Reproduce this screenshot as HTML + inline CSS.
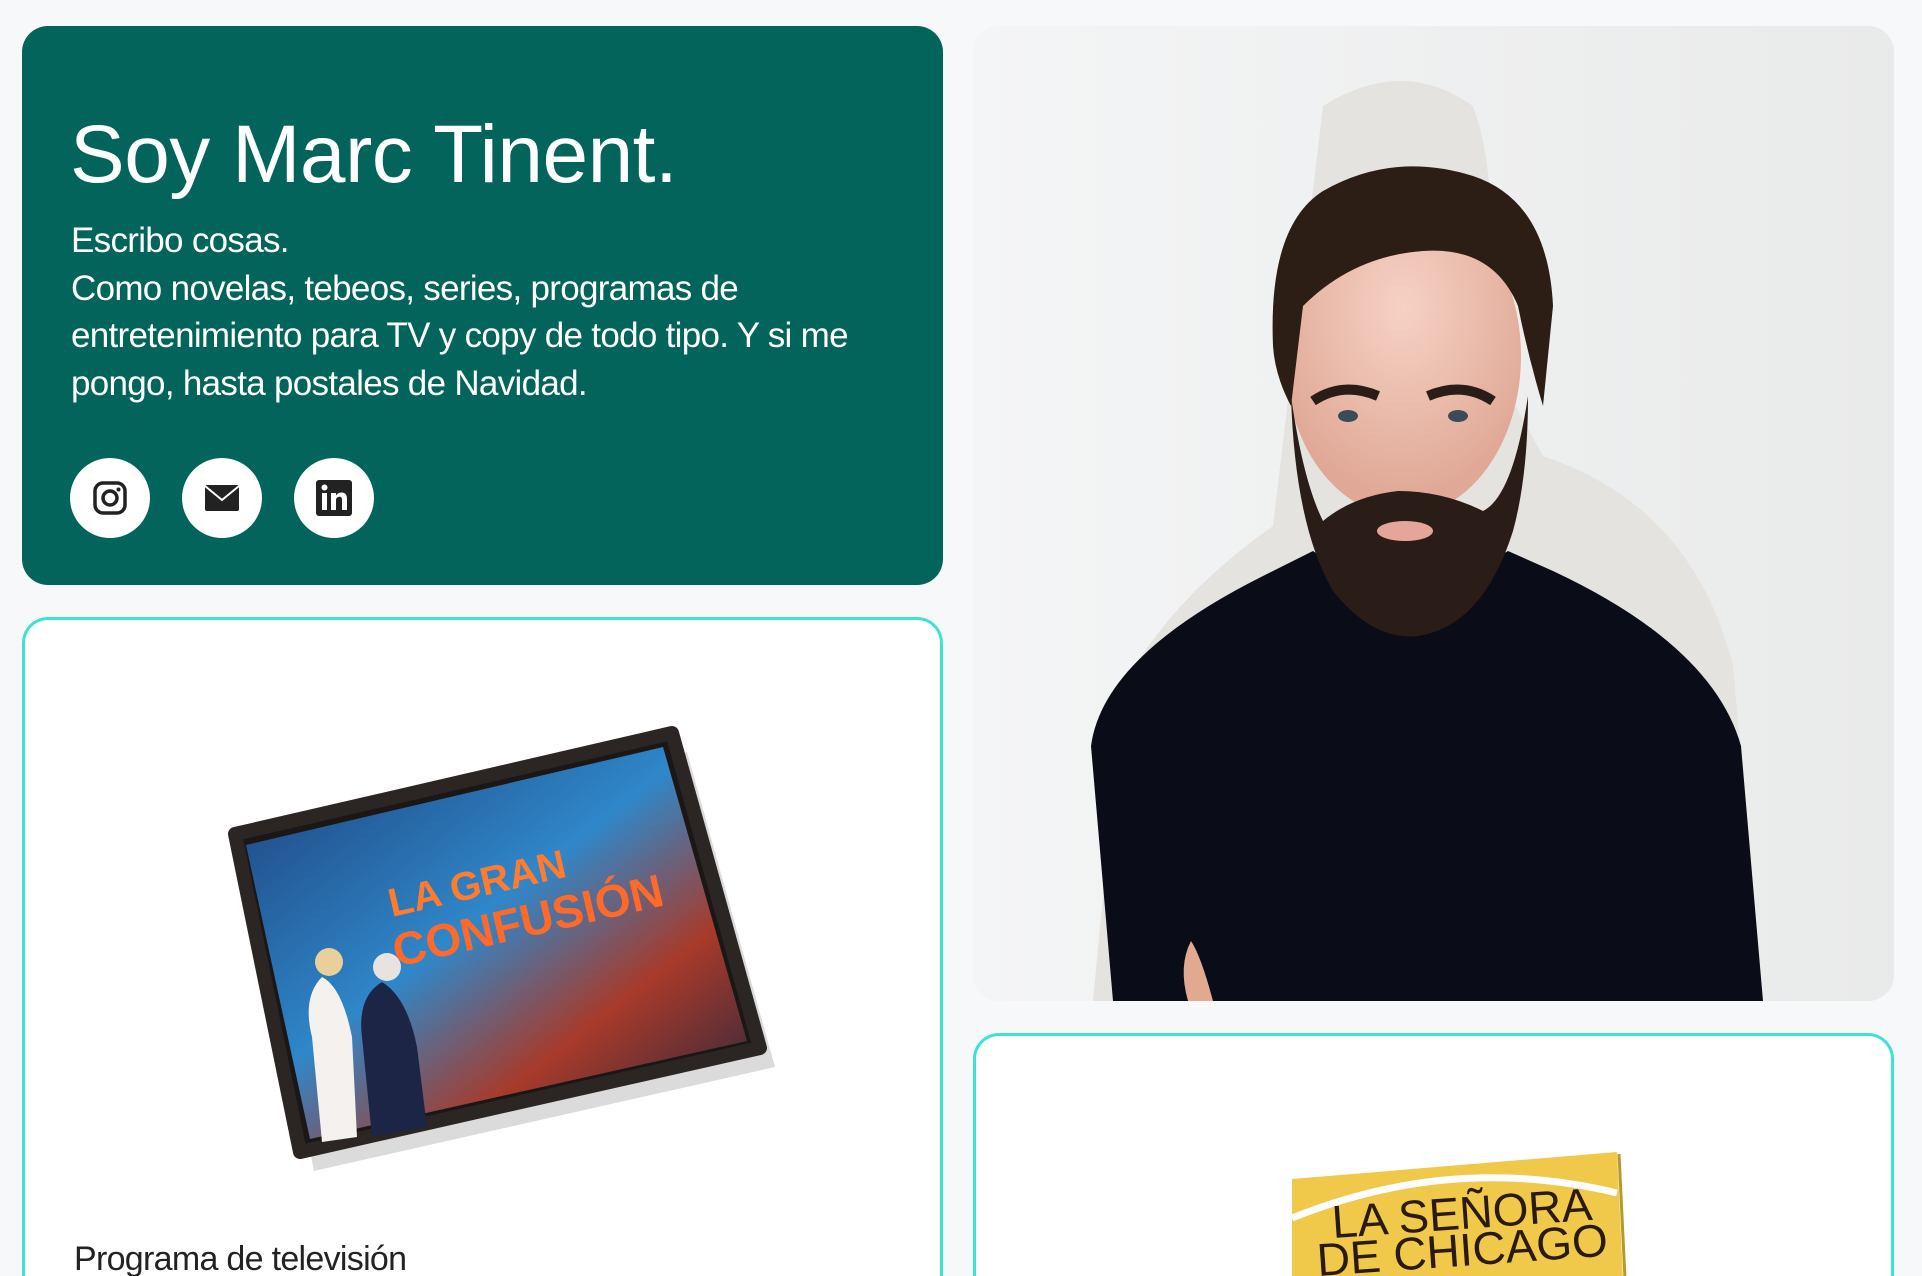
<!DOCTYPE html>
<html><head><meta charset="utf-8">
<style>
html,body{margin:0;padding:0;width:1922px;height:1276px;overflow:hidden}
body{background:#f6f8fa;font-family:"Liberation Sans",sans-serif}
#wrap{position:relative;width:1922px;height:1276px;overflow:hidden}
.hero{position:absolute;left:22px;top:26px;width:921px;height:559px;background:#02645b;border-radius:26px;color:#fff}
.hero h1{position:absolute;left:48px;top:88px;margin:0;font-weight:400;font-size:82px;line-height:82px;letter-spacing:-0.5px;white-space:nowrap}
.hero p{position:absolute;left:49px;top:191px;margin:0;font-size:35px;line-height:47.5px;white-space:nowrap;letter-spacing:-0.7px}
.ic{position:absolute;top:432px;width:80px;height:80px;border-radius:50%;background:#fff}
.ic svg{position:absolute;left:20px;top:20px}
.photo{position:absolute;left:973px;top:26px;width:921px;height:975px;border-radius:26px;overflow:hidden;background:#f1f2f3}
.card{position:absolute;background:#fff;border:3px solid #3fe2d2;border-bottom:0;border-radius:26px 26px 0 0;overflow:hidden}
</style></head><body><div id="wrap">
<div class="hero">
<h1>Soy Marc Tinent.</h1>
<p>Escribo cosas.<br>Como novelas, tebeos, series, programas de<br>entretenimiento para TV y copy de todo tipo. Y si me<br>pongo, hasta postales de Navidad.</p>
<div class="ic" style="left:48px"><svg width="40" height="40" viewBox="0 0 40 40"><rect x="5" y="5" width="30" height="30" rx="8" fill="none" stroke="#222" stroke-width="3.5"/><circle cx="20" cy="20" r="7" fill="none" stroke="#222" stroke-width="3.5"/><circle cx="28.5" cy="11.5" r="2" fill="#222"/></svg></div>
<div class="ic" style="left:160px"><svg width="40" height="40" viewBox="0 0 40 40"><rect x="3" y="7" width="34" height="26" rx="2" fill="#222"/><path d="M3 8 L20 22 L37 8" fill="none" stroke="#fff" stroke-width="2"/></svg></div>
<div class="ic" style="left:272px"><svg width="40" height="40" viewBox="0 0 40 40"><rect x="2" y="2" width="36" height="36" rx="3" fill="#222"/><rect x="8" y="15" width="5" height="17" fill="#fff"/><circle cx="10.5" cy="9.5" r="3" fill="#fff"/><path d="M17 15h5v2.5c1.2-2 3-3 5.5-3 4 0 5.5 2.5 5.5 6.5V32h-5V22c0-2-.7-3.2-2.5-3.2S22 20 22 22v10h-5z" fill="#fff"/></svg></div>
</div>

<div class="photo">
<svg width="921" height="975" viewBox="0 0 921 975">
<defs><linearGradient id="w" x1="0" y1="0" x2="1" y2="0"><stop offset="0" stop-color="#f4f5f6"/><stop offset="1" stop-color="#e9eaea"/></linearGradient>
<radialGradient id="sk" cx="0.5" cy="0.35" r="0.6"><stop offset="0" stop-color="#f6d2c4"/><stop offset="1" stop-color="#e0a896"/></radialGradient></defs>
<rect width="921" height="975" fill="url(#w)"/>
<path d="M350 80 Q430 30 500 80 Q530 160 510 320 L570 430 Q720 480 760 640 L790 975 L120 975 L150 660 Q200 570 300 500 Z" fill="#e4e3df"/>
<path d="M140 975 L118 720 Q130 630 290 550 L340 525 Q430 590 535 525 L580 545 Q740 620 768 720 L790 975 Z" fill="#0a0d18"/>
<path d="M215 975 Q205 940 218 915 Q228 930 240 975 Z" fill="#e0a990"/>
<ellipse cx="430" cy="330" rx="118" ry="160" fill="url(#sk)"/>
<path d="M300 320 Q295 200 350 165 Q420 125 500 150 Q575 175 580 280 L570 380 Q555 330 545 280 Q520 220 450 225 Q380 230 330 280 L318 380 Q302 350 300 320 Z" fill="#2c1d15"/>
<path d="M318 370 Q322 500 360 565 Q400 615 445 610 Q510 600 540 505 Q555 450 555 370 Q540 470 510 485 Q470 465 425 465 Q380 470 350 495 Q330 455 318 370 Z" fill="#2a1c16"/>
<ellipse cx="432" cy="505" rx="28" ry="10" fill="#e5a59a"/>
<path d="M340 375 Q370 355 405 370" stroke="#2a1c16" stroke-width="10" fill="none"/>
<path d="M455 370 Q490 355 520 375" stroke="#2a1c16" stroke-width="10" fill="none"/>
<ellipse cx="375" cy="390" rx="10" ry="6" fill="#3d4a58"/>
<ellipse cx="485" cy="390" rx="10" ry="6" fill="#3d4a58"/>
</svg>
</div>

<div class="card" style="left:22px;top:617px;width:915px;height:659px">
<svg width="915" height="659" viewBox="0 0 915 659" style="position:absolute;left:-3px;top:-3px">
<defs><linearGradient id="sc" x1="0" y1="0" x2="1" y2="1"><stop offset="0" stop-color="#1e3f7a"/><stop offset="0.45" stop-color="#2f87c9"/><stop offset="0.7" stop-color="#a83a2a"/><stop offset="1" stop-color="#1b2540"/></linearGradient></defs>
<polygon points="222,230 660,128 748,443 287,547" fill="#999" opacity="0.35" transform="translate(5,7)"/>
<polygon points="213,217 650,116 738,431 278,535" fill="#1a1716" stroke="#2b2623" stroke-width="14" stroke-linejoin="round"/>
<polygon points="224,228 641,130 725,424 288,522" fill="url(#sc)"/>
<text x="0" y="0" font-family="Liberation Sans Narrow, Liberation Sans, sans-serif" font-size="40" font-weight="700" fill="#ff7b2e" transform="translate(370,300) rotate(-13)">LA GRAN</text>
<text x="0" y="0" font-family="Liberation Sans Narrow, Liberation Sans, sans-serif" font-size="46" font-weight="700" fill="#ff6a2a" transform="translate(375,350) rotate(-13)">CONFUSIÓN</text>
<path d="M290 420 Q280 380 300 360 Q320 370 330 420 L335 520 L300 525 Z" fill="#f4f1ee"/>
<path d="M340 420 Q335 380 360 365 Q385 380 395 430 L405 510 L350 520 Z" fill="#1d2546"/>
<circle cx="307" cy="345" r="14" fill="#e9cf9a"/><circle cx="365" cy="350" r="14" fill="#e7e3df"/>
</svg>
<div style="position:absolute;left:49px;top:620px;font-size:34px;line-height:38px;color:#222;letter-spacing:-0.7px;white-space:nowrap">Programa de televisión</div>
</div>

<div class="card" style="left:973px;top:1033px;width:915px;height:243px">
<svg width="915" height="246" viewBox="0 0 915 246" style="position:absolute;left:-3px;top:-3px">
<polygon points="319,146 644,119 650,246 319,246" fill="#f0c84a"/>
<line x1="646" y1="121" x2="652" y2="246" stroke="#b59a2a" stroke-width="3"/>
<path d="M319 185 Q480 120 644 160" stroke="#fff" stroke-width="7" fill="none"/>
<text x="360" y="205" font-family="Liberation Sans Narrow, Liberation Sans, sans-serif" font-size="46" fill="#2a1a10" transform="rotate(-4 360 205)">LA SEÑORA</text>
<text x="345" y="243" font-family="Liberation Sans Narrow, Liberation Sans, sans-serif" font-size="46" fill="#2a1a10" transform="rotate(-4 345 243)">DE CHICAGO</text>
</svg>
</div>
</div></body></html>
